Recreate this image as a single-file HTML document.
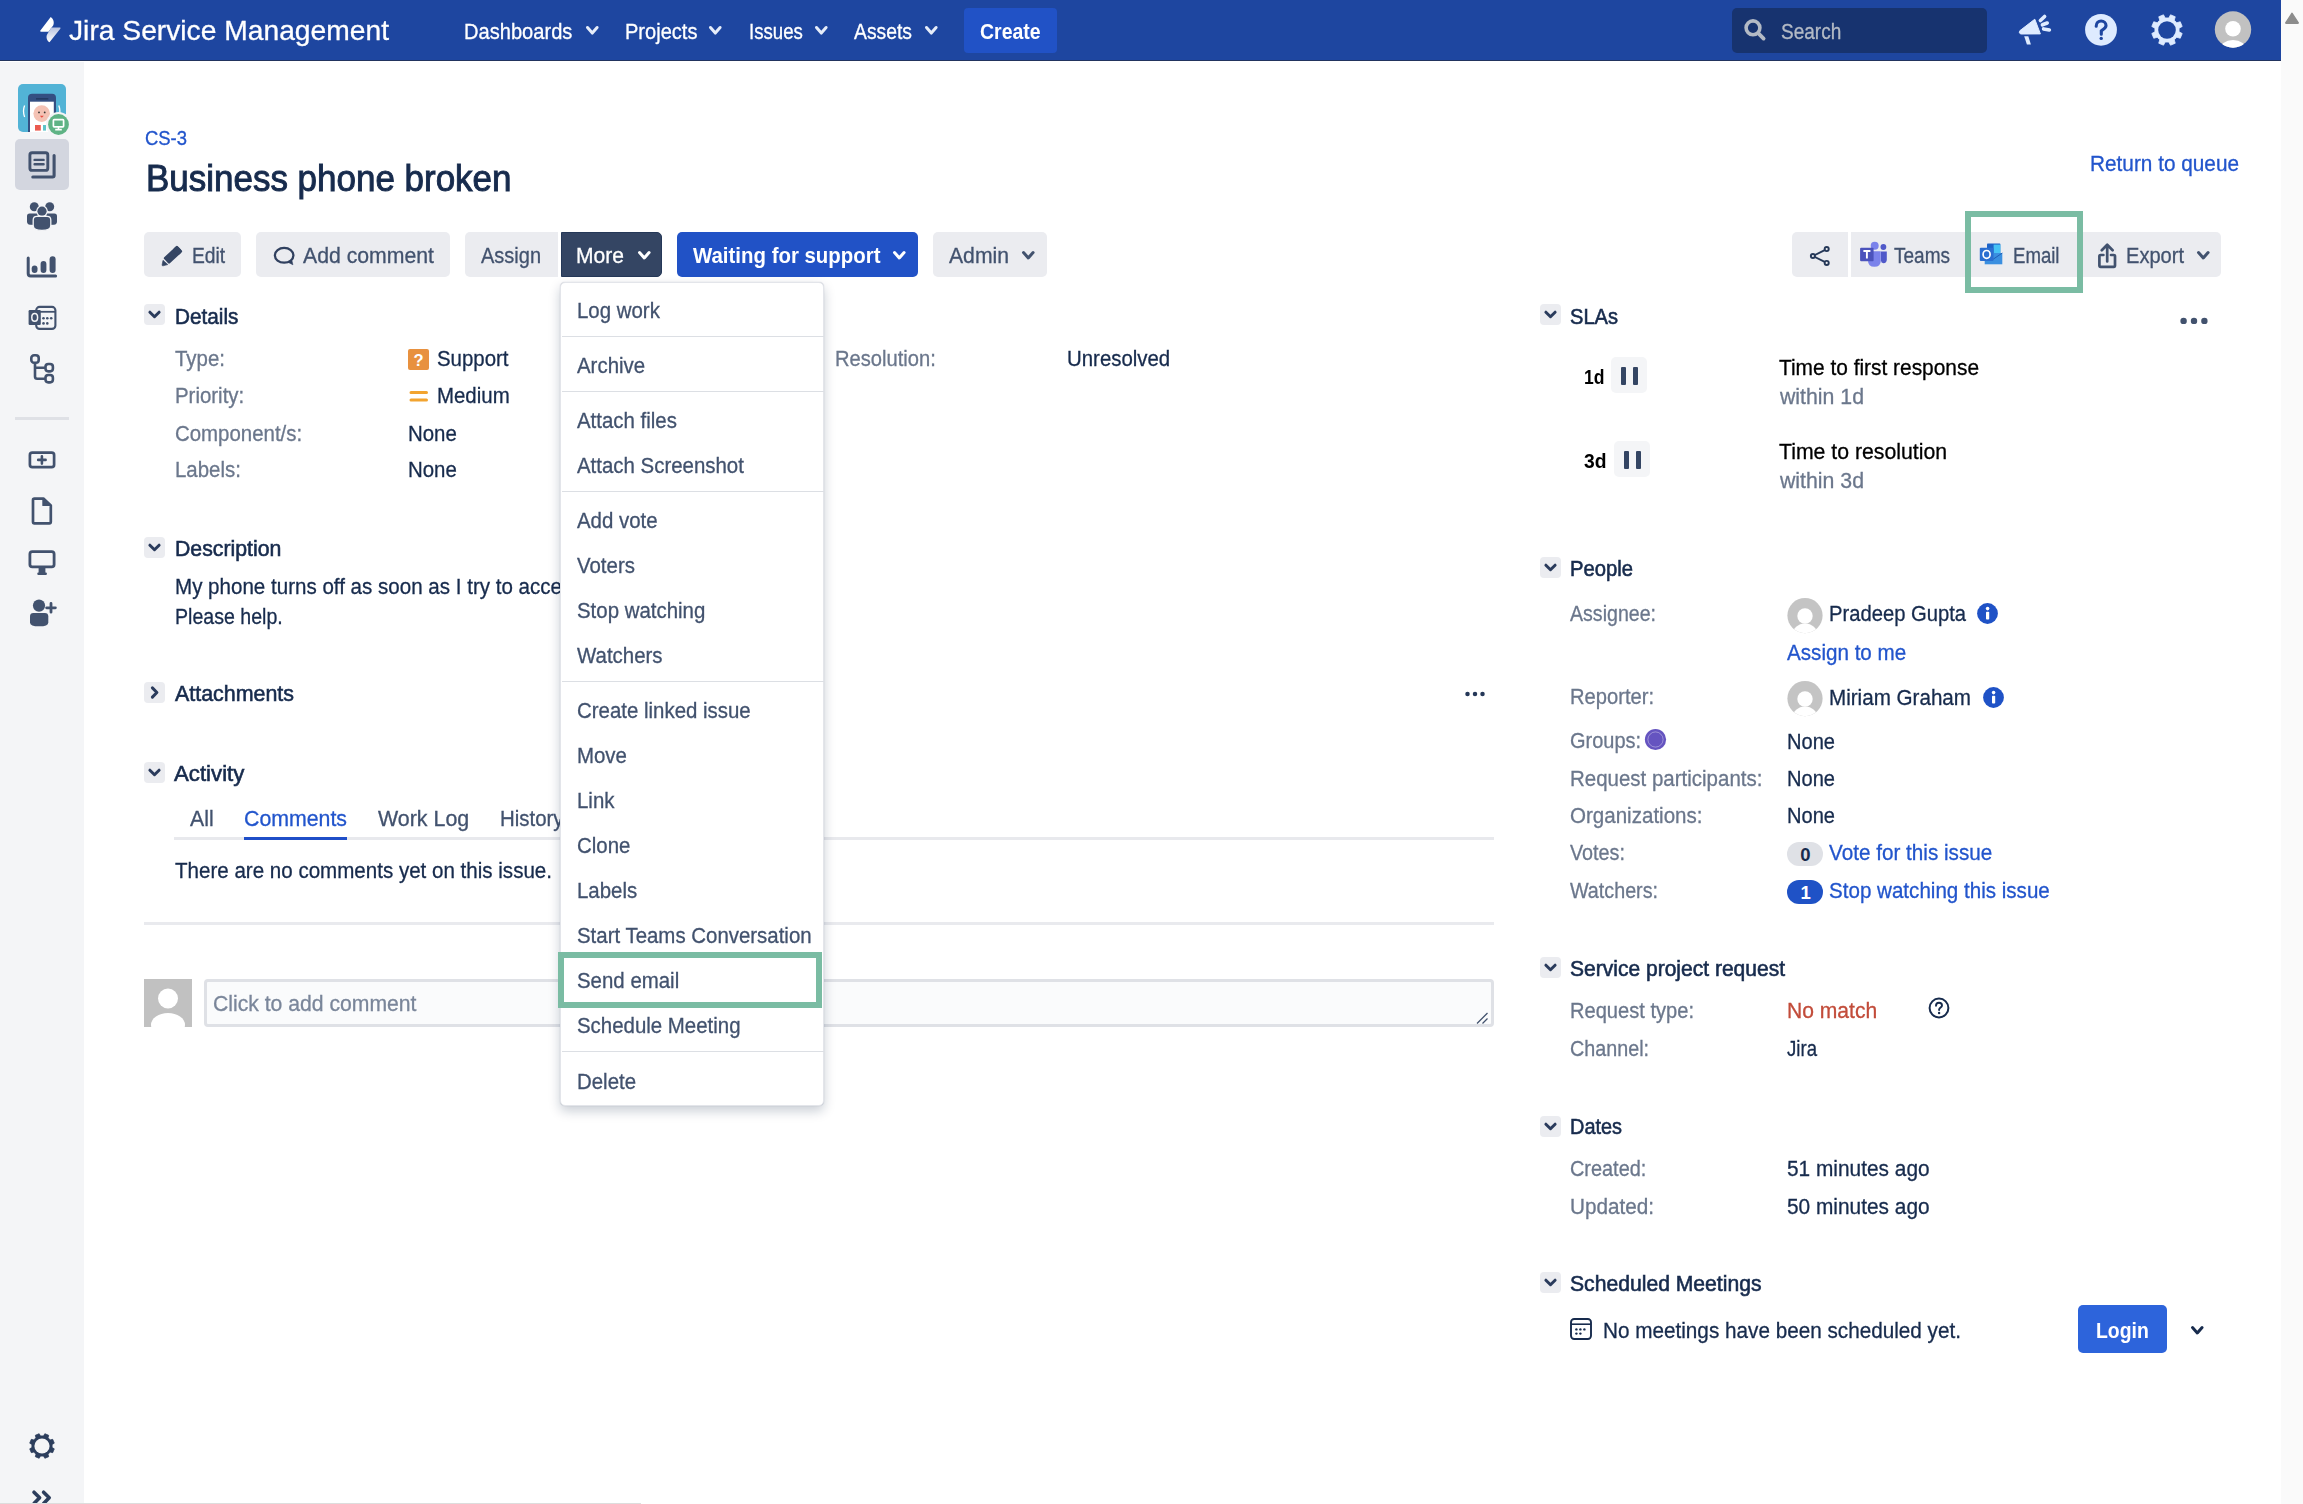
<!DOCTYPE html>
<html><head><meta charset="utf-8"><title>CS-3 Business phone broken</title>
<style>
html,body{margin:0;padding:0;width:2303px;height:1504px;overflow:hidden;background:#fff;font-family:"Liberation Sans",sans-serif;}
.t{position:absolute;white-space:nowrap;transform-origin:0 0;}
.r{position:absolute;}
.s{position:absolute;overflow:visible;}
</style></head><body>
<div class="r" style="left:0px;top:0px;width:2281px;height:60px;background:#1e46a0;"></div>
<div class="r" style="left:0px;top:60px;width:2281px;height:1px;background:#22345e;"></div>
<div class="r" style="left:2281px;top:0px;width:22px;height:1504px;background:#fafafa;"></div>
<svg class="s" style="left:2283px;top:10px;" width="18" height="16" viewBox="0 0 18 16"><path d="M9 3.2 L15.2 12.6 Q15.6 13.4 14.7 13.4 L3.3 13.4 Q2.4 13.4 2.8 12.6 Z" fill="#8c8c8c" stroke="#8c8c8c" stroke-width="1.2" stroke-linejoin="round"/></svg>
<svg class="s" style="left:38px;top:15px;" width="26" height="30" viewBox="0 0 26 30"><defs><linearGradient id="lg1" x1="0" y1="0" x2="0" y2="1"><stop offset="0" stop-color="#b9c3e0"/><stop offset="1" stop-color="#ffffff"/></linearGradient></defs>
<path d="M12.7 2 C15.2 3.6 16.6 7.2 15.3 10.2 L10.5 16.8 L3 16.8 C2.2 16.8 1.9 16.2 2.4 15.6 Z" fill="#fff"/>
<path d="M21.8 12.6 C22.5 12.6 22.8 13.2 22.3 13.8 L11.5 27.3 C9.1 25.7 7.7 22.3 9.1 19.4 L13.3 12.6 Z" fill="url(#lg1)"/></svg>
<div class="t " style="left:69.00px;top:15.0px;font-size:28px;line-height:31px;color:#ffffff;-webkit-text-stroke:0.3px #ffffff;transform:scaleX(1.0079);">Jira Service Management</div>
<div class="t " style="left:464.00px;top:20.0px;font-size:21.5px;line-height:24px;color:#ffffff;-webkit-text-stroke:0.3px #ffffff;transform:scaleX(0.9350);">Dashboards</div>
<svg class="s" style="left:583.6px;top:23.8px;" width="16.6" height="12.6" viewBox="0 0 16.6 12.6"><path d="M3.50 3.50 L8.30 9.10 L13.10 3.50" fill="none" stroke="#e6edfa" stroke-width="3" stroke-linecap="round" stroke-linejoin="round"/></svg>
<div class="t " style="left:624.60px;top:20.0px;font-size:21.5px;line-height:24px;color:#ffffff;-webkit-text-stroke:0.3px #ffffff;transform:scaleX(0.9322);">Projects</div>
<svg class="s" style="left:707.4px;top:23.8px;" width="16.6" height="12.6" viewBox="0 0 16.6 12.6"><path d="M3.50 3.50 L8.30 9.10 L13.10 3.50" fill="none" stroke="#e6edfa" stroke-width="3" stroke-linecap="round" stroke-linejoin="round"/></svg>
<div class="t " style="left:748.50px;top:20.0px;font-size:21.5px;line-height:24px;color:#ffffff;-webkit-text-stroke:0.3px #ffffff;transform:scaleX(0.8674);">Issues</div>
<svg class="s" style="left:813.3px;top:23.8px;" width="16.6" height="12.6" viewBox="0 0 16.6 12.6"><path d="M3.50 3.50 L8.30 9.10 L13.10 3.50" fill="none" stroke="#e6edfa" stroke-width="3" stroke-linecap="round" stroke-linejoin="round"/></svg>
<div class="t " style="left:854.40px;top:20.0px;font-size:21.5px;line-height:24px;color:#ffffff;-webkit-text-stroke:0.3px #ffffff;transform:scaleX(0.8990);">Assets</div>
<svg class="s" style="left:923px;top:23.8px;" width="16.6" height="12.6" viewBox="0 0 16.6 12.6"><path d="M3.50 3.50 L8.30 9.10 L13.10 3.50" fill="none" stroke="#e6edfa" stroke-width="3" stroke-linecap="round" stroke-linejoin="round"/></svg>
<div class="r" style="left:964px;top:8px;width:93px;height:45px;background:#2152c6;border-radius:4px;"></div>
<div class="t " style="left:980.40px;top:20.0px;font-size:21.5px;line-height:24px;color:#ffffff;font-weight:bold;transform:scaleX(0.9055);">Create</div>
<div class="r" style="left:1732px;top:8px;width:255px;height:45px;background:#17336f;border-radius:5px;"></div>
<svg class="s" style="left:1740px;top:16px;" width="30" height="30" viewBox="0 0 30 30"><circle cx="13" cy="11.8" r="6.9" fill="none" stroke="#b3bac5" stroke-width="3.6"/><path d="M18.2 17.2 L23.6 22.6" stroke="#b3bac5" stroke-width="3.8" stroke-linecap="round"/></svg>
<div class="t " style="left:1781.00px;top:20.0px;font-size:21.5px;line-height:24px;color:#b3bac5;-webkit-text-stroke:0.3px #b3bac5;transform:scaleX(0.8852);">Search</div>
<svg class="s" style="left:2015px;top:12px;" width="40" height="36" viewBox="0 0 40 36"><path d="M5 18.6 L19.8 7.2 L25.4 21.9 L6.2 22 Q3.2 21.4 5 18.6 Z" fill="#deebff" stroke="#deebff" stroke-width="1" stroke-linejoin="round"/>
<path d="M9.2 24.3 L13.3 24.3 L15.9 32.6 L11.9 32.6 Z" fill="#deebff"/>
<path d="M25.4 8.6 L29.6 4.4 M27.4 12.8 L32.2 11 M28.6 16.9 L34.4 18" stroke="#deebff" stroke-width="3.6" stroke-linecap="round"/></svg>
<svg class="s" style="left:2084px;top:13px;" width="34" height="34" viewBox="0 0 34 34"><circle cx="17" cy="16.8" r="15.9" fill="#deebff"/>
<path d="M12.2 13.2 C12.2 9.8 14.4 8 17.1 8 C19.9 8 22 9.9 22 12.5 C22 15.4 19.2 16.1 17.3 17.9 L17.3 21.2" fill="none" stroke="#1e46a0" stroke-width="3.1" stroke-linecap="round"/>
<circle cx="17.2" cy="25.4" r="1.7" fill="#1e46a0"/></svg>
<svg class="s" style="left:2150px;top:12.8px;" width="34" height="34" viewBox="0 0 34 34"><path d="M32.20 20.52 L30.24 25.26 L26.81 24.25 L24.25 26.81 L25.26 30.24 L20.52 32.20 L18.81 29.06 L15.19 29.06 L13.48 32.20 L8.74 30.24 L9.75 26.81 L7.19 24.25 L3.76 25.26 L1.80 20.52 L4.94 18.81 L4.94 15.19 L1.80 13.48 L3.76 8.74 L7.19 9.75 L9.75 7.19 L8.74 3.76 L13.48 1.80 L15.19 4.94 L18.81 4.94 L20.52 1.80 L25.26 3.76 L24.25 7.19 L26.81 9.75 L30.24 8.74 L32.20 13.48 L29.06 15.19 L29.06 18.81 Z" fill="#deebff" stroke="#deebff" stroke-width="0.8" stroke-linejoin="round"/><circle cx="17" cy="17" r="8.8" fill="#1e46a0"/></svg>
<svg class="s" style="left:2214px;top:11px;" width="38" height="38" viewBox="0 0 38 38"><defs><clipPath id="avc"><circle cx="19" cy="18.5" r="18.2"/></clipPath></defs>
<circle cx="19" cy="18.5" r="18.2" fill="#c1c1c1"/>
<g clip-path="url(#avc)"><circle cx="19" cy="17.8" r="7.8" fill="#fff"/><ellipse cx="19" cy="38.6" rx="13.5" ry="9.5" fill="#fff"/></g></svg>
<div class="r" style="left:0px;top:61px;width:84px;height:1px;background:#ffffff;"></div>
<div class="r" style="left:0px;top:62px;width:84px;height:1442px;background:#f4f5f7;"></div>
<svg class="s" style="left:16px;top:82px;" width="58" height="58" viewBox="0 0 58 58"><defs><clipPath id="pa"><rect x="2" y="2" width="48" height="48" rx="5"/></clipPath></defs>
<rect x="2" y="2" width="48" height="48" rx="5" fill="#52b3d6"/>
<g clip-path="url(#pa)">
<path d="M12 50 L12 16 Q12 11.8 16.2 11.8 L36 11.8 Q40 11.8 40 16 L40 50 Z" fill="#344f82"/>
<rect x="14" y="19.7" width="23.8" height="32" fill="#fff"/>
<rect x="20" y="16" width="12.3" height="1.6" fill="#243a63"/>
<circle cx="25.7" cy="31.6" r="8.3" fill="#f4c2b4"/>
<circle cx="23" cy="30.4" r="0.9" fill="#333"/><circle cx="28.7" cy="30.4" r="0.9" fill="#333"/>
<path d="M23.8 33.8 L27.8 33.8 L25.8 35.8 Z" fill="#e84a3f"/>
<rect x="19" y="43" width="5.8" height="5.6" fill="#eb5a4f"/>
<rect x="27" y="43" width="3" height="5.6" fill="#5dc3c8"/>
<path d="M8.6 23.5 Q6.4 29 8.6 35" fill="none" stroke="#fff" stroke-width="1.3"/>
<path d="M42.8 23.5 Q45 29 42.8 35" fill="none" stroke="#fff" stroke-width="1.3"/>
</g>
<circle cx="42.5" cy="42.5" r="12.6" fill="#f4f5f7"/>
<circle cx="42.5" cy="42.5" r="10.4" fill="#5fb385"/>
<rect x="37.4" y="37.6" width="10.2" height="7.2" rx="0.8" fill="none" stroke="#fff" stroke-width="1.7"/>
<path d="M42.5 45 L42.5 47.4 M39.2 47.6 L45.8 47.6" stroke="#fff" stroke-width="1.6"/></svg>
<div class="r" style="left:15px;top:139px;width:54px;height:51px;background:#d3d6df;border-radius:5px;"></div>
<svg class="s" style="left:26px;top:149px;" width="34" height="34" viewBox="0 0 34 34"><rect x="3.9" y="3.8" width="17.9" height="17.6" rx="2.2" fill="none" stroke="#42526e" stroke-width="2.9"/>
<path d="M8.6 10.9 L17.6 10.9 M8.6 15.2 L17.6 15.2" stroke="#42526e" stroke-width="2.4" stroke-linecap="round"/>
<path d="M28.1 6.5 L28.1 26.5 Q28.1 28 26.6 28 L6.8 28" fill="none" stroke="#42526e" stroke-width="3.1" stroke-linecap="round"/></svg>
<svg class="s" style="left:25px;top:200px;" width="34" height="34" viewBox="0 0 34 34"><circle cx="9.3" cy="6.8" r="4.5" fill="#42526e"/><circle cx="24.7" cy="6.8" r="4.5" fill="#42526e"/>
<path d="M2 16 Q2 13.4 4.6 13.4 L12.6 13.4 L12.6 25 L5 24.8 Q2 24.6 2 21.6 Z" fill="#42526e"/>
<path d="M32 16 Q32 13.4 29.4 13.4 L21.4 13.4 L21.4 25 L29 24.8 Q32 24.6 32 21.6 Z" fill="#42526e"/>
<circle cx="17" cy="11.2" r="5.8" fill="#f4f5f7"/><circle cx="17" cy="11.2" r="4.6" fill="#42526e"/>
<path d="M8.2 20 Q8.2 16.4 11.8 16.4 L22.2 16.4 Q25.8 16.4 25.8 20 L25.8 25.4 Q25.8 30.4 17 30.4 Q8.2 30.4 8.2 25.4 Z" fill="#42526e" stroke="#f4f5f7" stroke-width="1.3"/></svg>
<svg class="s" style="left:25px;top:254px;" width="34" height="26" viewBox="0 0 34 26"><path d="M3.2 3.9 L3.2 19.6 Q3.2 22.1 5.7 22.1 L30.6 22.1" fill="none" stroke="#42526e" stroke-width="3" stroke-linecap="round"/>
<rect x="6.7" y="11.4" width="5.8" height="7.6" rx="2.9" fill="#42526e"/>
<rect x="15.6" y="7" width="5.8" height="12" rx="2.9" fill="#42526e"/>
<rect x="24.6" y="2.3" width="6" height="16.7" rx="3" fill="#42526e"/></svg>
<svg class="s" style="left:26px;top:304px;" width="32" height="28" viewBox="0 0 32 28"><rect x="10.2" y="2.9" width="19.2" height="22" rx="3.4" fill="none" stroke="#42526e" stroke-width="2.1"/>
<path d="M10.2 7.8 L29.4 7.8" stroke="#42526e" stroke-width="1.8"/>
<rect x="2.6" y="6" width="12.2" height="14.9" rx="1.2" fill="#42526e"/>
<ellipse cx="8.7" cy="13.4" rx="2.9" ry="3.8" fill="none" stroke="#f4f5f7" stroke-width="1.5"/>
<circle cx="17.5" cy="14.3" r="1.3" fill="#42526e"/><circle cx="21.3" cy="14.3" r="1.3" fill="#42526e"/><circle cx="25.2" cy="14.3" r="1.3" fill="#42526e"/>
<circle cx="17.5" cy="19.4" r="1.3" fill="#42526e"/><circle cx="21.3" cy="19.4" r="1.3" fill="#42526e"/></svg>
<svg class="s" style="left:28px;top:352px;" width="30" height="32" viewBox="0 0 30 32"><rect x="3.3" y="3.3" width="7.4" height="7.4" rx="2.8" fill="none" stroke="#42526e" stroke-width="2.6"/>
<rect x="17.5" y="12" width="7.4" height="7.4" rx="2.8" fill="none" stroke="#42526e" stroke-width="2.6"/>
<rect x="17.5" y="23" width="7.4" height="7.4" rx="2.8" fill="none" stroke="#42526e" stroke-width="2.6"/>
<path d="M7 10.7 L7 24.5 Q7 26.7 9.2 26.7 L17.5 26.7 M7 15.7 L17.5 15.7" fill="none" stroke="#42526e" stroke-width="2.6"/></svg>
<div class="r" style="left:15px;top:417px;width:54px;height:3px;background:#dfe1e6;"></div>
<svg class="s" style="left:26px;top:449px;" width="32" height="22" viewBox="0 0 32 22"><rect x="3.9" y="3.6" width="24.2" height="14.6" rx="2.4" fill="none" stroke="#42526e" stroke-width="2.7"/>
<path d="M15.9 7.2 L15.9 14.6 M12.2 10.9 L19.6 10.9" stroke="#42526e" stroke-width="2.6" stroke-linecap="round"/></svg>
<svg class="s" style="left:29px;top:495px;" width="26" height="32" viewBox="0 0 26 32"><path d="M4 5 Q4 3.6 5.4 3.6 L14.4 3.6 L21.8 10.6 L21.8 26.8 Q21.8 28.3 20.3 28.3 L5.4 28.3 Q4 28.3 4 26.8 Z" fill="none" stroke="#42526e" stroke-width="2.7" stroke-linejoin="round"/>
<path d="M14 3.6 L14 10.4 L21.8 10.4" fill="#42526e" stroke="#42526e" stroke-width="1.4" stroke-linejoin="round"/></svg>
<svg class="s" style="left:26px;top:548px;" width="32" height="30" viewBox="0 0 32 30"><rect x="3.9" y="3.6" width="24.2" height="15.2" rx="2.4" fill="none" stroke="#42526e" stroke-width="2.8"/>
<rect x="12.6" y="19" width="6.8" height="6" fill="#42526e"/>
<rect x="11.3" y="24.6" width="9.6" height="2.4" rx="1" fill="#42526e"/></svg>
<svg class="s" style="left:28px;top:597px;" width="30" height="32" viewBox="0 0 30 32"><circle cx="11" cy="8.6" r="6.1" fill="#42526e"/>
<path d="M2 19.4 Q2 16 5.4 16 L16.9 16 Q20.3 16 20.3 19.4 L20.3 25.4 Q20.3 29.3 11.2 29.3 Q2 29.3 2 25.4 Z" fill="#42526e"/>
<path d="M23 6.4 L23 15.2 M18.6 10.8 L27.4 10.8" stroke="#42526e" stroke-width="2.8" stroke-linecap="round"/></svg>
<svg class="s" style="left:28.1px;top:1432px;" width="28" height="28" viewBox="0 0 28 28"><path d="M26.27 16.85 L24.69 20.67 L22.20 20.06 L20.06 22.20 L20.67 24.69 L16.85 26.27 L15.52 24.09 L12.48 24.09 L11.15 26.27 L7.33 24.69 L7.94 22.20 L5.80 20.06 L3.31 20.67 L1.73 16.85 L3.91 15.52 L3.91 12.48 L1.73 11.15 L3.31 7.33 L5.80 7.94 L7.94 5.80 L7.33 3.31 L11.15 1.73 L12.48 3.91 L15.52 3.91 L16.85 1.73 L20.67 3.31 L20.06 5.80 L22.20 7.94 L24.69 7.33 L26.27 11.15 L24.09 12.48 L24.09 15.52 Z" fill="#2c3e5d" stroke="#2c3e5d" stroke-width="0.8" stroke-linejoin="round"/><circle cx="14" cy="14" r="7.6" fill="#f4f5f7"/></svg>
<svg class="s" style="left:29px;top:1487px;" width="28" height="20" viewBox="0 0 28 20"><path d="M5 5.2 L10.6 10.8 L5 16.4 M14.6 5.2 L20.2 10.8 L14.6 16.4" fill="none" stroke="#2c3e5d" stroke-width="3.6" stroke-linecap="round" stroke-linejoin="round"/></svg>
<div class="r" style="left:0px;top:1503px;width:641px;height:1px;background:#dddddd;"></div>
<div class="t " style="left:144.50px;top:127.0px;font-size:19.5px;line-height:22px;color:#2255cc;-webkit-text-stroke:0.3px #2255cc;transform:scaleX(0.9454);">CS-3</div>
<div class="t " style="left:146.30px;top:158.2px;font-size:36px;line-height:41px;color:#172b4d;transform:scaleX(0.9713);-webkit-text-stroke:0.95px #172b4d;">Business phone broken</div>
<div class="t " style="left:2089.60px;top:152.4px;font-size:21.5px;line-height:24px;color:#2255cc;-webkit-text-stroke:0.3px #2255cc;transform:scaleX(0.9663);">Return to queue</div>
<div class="r" style="left:144px;top:232px;width:97px;height:45px;background:#ebecf0;border-radius:5px;"></div>
<svg class="s" style="left:158px;top:242px;" width="28" height="28" viewBox="0 0 28 28"><g transform="translate(14.97,12.8) rotate(-43)"><rect x="-9.3" y="-4.15" width="18.6" height="8.3" rx="1.2" fill="#344563"/><rect x="3" y="-4.15" width="6.3" height="8.3" rx="2.6" fill="#344563"/></g>
<path d="M5 18.3 L9.8 22.6 L5.2 23.8 Q3.9 24.1 4.1 22.8 Z" fill="#344563" stroke="#344563" stroke-width="0.6" stroke-linejoin="round"/></svg>
<div class="t " style="left:191.80px;top:244.0px;font-size:21.5px;line-height:24px;color:#42526e;-webkit-text-stroke:0.3px #42526e;transform:scaleX(0.8962);">Edit</div>
<div class="r" style="left:256px;top:232px;width:194px;height:45px;background:#ebecf0;border-radius:5px;"></div>
<svg class="s" style="left:270px;top:243px;" width="28" height="26" viewBox="0 0 28 26"><ellipse cx="14.15" cy="12.3" rx="9.3" ry="7.4" fill="none" stroke="#30405f" stroke-width="2.3"/>
<path d="M18 19.2 L21.8 17.2 L22.9 21.8 Z" fill="#30405f" stroke="#30405f" stroke-width="0.6" stroke-linejoin="round"/></svg>
<div class="t " style="left:302.70px;top:244.0px;font-size:21.5px;line-height:24px;color:#42526e;-webkit-text-stroke:0.3px #42526e;transform:scaleX(0.9876);">Add comment</div>
<div class="r" style="left:465px;top:232px;width:93px;height:45px;background:#ebecf0;border-radius:5px 0 0 5px"></div>
<div class="t " style="left:481.30px;top:244.0px;font-size:21.5px;line-height:24px;color:#42526e;-webkit-text-stroke:0.3px #42526e;transform:scaleX(0.9298);">Assign</div>
<div class="r" style="left:561px;top:232px;width:99px;height:43px;background:#344563;border:1px solid #253858;border-radius:0 5px 5px 0"></div>
<div class="t " style="left:576.30px;top:244.0px;font-size:21.5px;line-height:24px;color:#ffffff;-webkit-text-stroke:0.3px #ffffff;transform:scaleX(0.9799);">More</div>
<svg class="s" style="left:636px;top:249px;" width="16.6" height="12.4" viewBox="0 0 16.6 12.4"><path d="M3.50 3.50 L8.30 8.90 L13.10 3.50" fill="none" stroke="#ffffff" stroke-width="3" stroke-linecap="round" stroke-linejoin="round"/></svg>
<div class="r" style="left:677px;top:232px;width:241px;height:45px;background:#2152c6;border-radius:5px;"></div>
<div class="t " style="left:692.80px;top:244.0px;font-size:21.5px;line-height:24px;color:#ffffff;font-weight:bold;transform:scaleX(0.9496);">Waiting for support</div>
<svg class="s" style="left:891.3px;top:249px;" width="16.6" height="12.4" viewBox="0 0 16.6 12.4"><path d="M3.50 3.50 L8.30 8.90 L13.10 3.50" fill="none" stroke="#ffffff" stroke-width="3" stroke-linecap="round" stroke-linejoin="round"/></svg>
<div class="r" style="left:933px;top:232px;width:114px;height:45px;background:#ebecf0;border-radius:5px;"></div>
<div class="t " style="left:949.20px;top:244.0px;font-size:21.5px;line-height:24px;color:#42526e;-webkit-text-stroke:0.3px #42526e;transform:scaleX(0.9846);">Admin</div>
<svg class="s" style="left:1020px;top:249px;" width="16.6" height="12.4" viewBox="0 0 16.6 12.4"><path d="M3.50 3.50 L8.30 8.90 L13.10 3.50" fill="none" stroke="#42526e" stroke-width="3" stroke-linecap="round" stroke-linejoin="round"/></svg>
<div class="r" style="left:1792px;top:232px;width:56px;height:45px;background:#ebecf0;border-radius:5px 0 0 5px"></div>
<svg class="s" style="left:1805px;top:242px;" width="30" height="30" viewBox="0 0 30 30"><path d="M7.9 14 L21.7 7.1 M7.9 14 L21.7 20.9" stroke="#253858" stroke-width="1.9"/>
<circle cx="7.9" cy="14" r="2.05" fill="#ebecf0" stroke="#253858" stroke-width="1.9"/>
<circle cx="21.7" cy="7.1" r="2.05" fill="#ebecf0" stroke="#253858" stroke-width="1.9"/>
<circle cx="21.7" cy="20.9" r="2.05" fill="#ebecf0" stroke="#253858" stroke-width="1.9"/></svg>
<div class="r" style="left:1851px;top:232px;width:370px;height:45px;background:#ebecf0;border-radius:0 5px 5px 0"></div>
<svg class="s" style="left:1858px;top:240px;" width="32" height="30" viewBox="0 0 32 30"><circle cx="25.4" cy="7" r="2.9" fill="#5059c9"/>
<path d="M23 11.4 L28.8 11.4 L28.8 19.6 Q28.8 23.2 25.4 23.2 Q23 23.2 23 20.8 Z" fill="#5059c9"/>
<circle cx="16.7" cy="5.8" r="4" fill="#7b83eb"/>
<path d="M10 11.2 L22.8 11.2 L22.8 20.8 Q22.8 26.8 16.4 26.8 Q10 26.8 10 20.8 Z" fill="#7b83eb"/>
<rect x="2.1" y="7.7" width="13.5" height="13.5" rx="1" fill="#4b53bc"/>
<path d="M5.4 11 L12.4 11 M8.9 11 L8.9 18.4" stroke="#fff" stroke-width="1.9"/></svg>
<div class="t " style="left:1894.00px;top:244.0px;font-size:21.5px;line-height:24px;color:#42526e;-webkit-text-stroke:0.3px #42526e;transform:scaleX(0.8843);">Teams</div>
<svg class="s" style="left:1977px;top:241px;" width="28" height="26" viewBox="0 0 28 26"><rect x="10" y="2.6" width="13.4" height="10" rx="0.8" fill="#1e64c8"/>
<rect x="16.6" y="3.6" width="6.8" height="8.6" fill="#50d9ff" opacity="0.8"/>
<path d="M7.7 12 L25.3 12 L25.3 23.3 L7.7 23.3 Z" fill="#3a8fe0"/>
<path d="M7.7 12 L16.5 18 L25.3 12" fill="none" stroke="#1f5fb8" stroke-width="1"/>
<rect x="2.8" y="6.7" width="13.7" height="13.4" rx="1" fill="#2a6fd1"/>
<ellipse cx="9.6" cy="13.4" rx="3.5" ry="3.9" fill="none" stroke="#fff" stroke-width="1.7"/></svg>
<div class="t " style="left:2013.00px;top:244.0px;font-size:21.5px;line-height:24px;color:#42526e;-webkit-text-stroke:0.3px #42526e;transform:scaleX(0.8649);">Email</div>
<svg class="s" style="left:2094px;top:241px;" width="26" height="30" viewBox="0 0 26 30"><path d="M13.2 4 L13.2 20.4 M7.8 9.2 L13.2 3.8 L18.6 9.2" fill="none" stroke="#42526e" stroke-width="2.7" stroke-linecap="round" stroke-linejoin="round"/>
<path d="M9.4 14 L6.6 14 Q5.4 14 5.4 15.2 L5.4 24.6 Q5.4 25.8 6.6 25.8 L19.8 25.8 Q21 25.8 21 24.6 L21 15.2 Q21 14 19.8 14 L17 14" fill="none" stroke="#42526e" stroke-width="2.7" stroke-linecap="round"/></svg>
<div class="t " style="left:2126.00px;top:244.0px;font-size:21.5px;line-height:24px;color:#42526e;-webkit-text-stroke:0.3px #42526e;transform:scaleX(0.9334);">Export</div>
<svg class="s" style="left:2195px;top:249px;" width="16.6" height="12.4" viewBox="0 0 16.6 12.4"><path d="M3.50 3.50 L8.30 8.90 L13.10 3.50" fill="none" stroke="#42526e" stroke-width="3" stroke-linecap="round" stroke-linejoin="round"/></svg>
<div class="r" style="left:1965px;top:211px;width:106px;height:70px;border:6px solid #7abca3"></div>
<div class="r" style="left:144px;top:304px;width:21px;height:21px;background:#ebecf0;border-radius:4px;"></div>
<svg class="s" style="left:144px;top:304px;" width="21" height="21" viewBox="0 0 21 21"><path d="M5.9 8.2 L10.5 12.7 L15.1 8.2" fill="none" stroke="#2a3b5c" stroke-width="3" stroke-linecap="round" stroke-linejoin="round"/></svg>
<div class="t " style="left:174.70px;top:304.7px;font-size:21.5px;line-height:24px;color:#172b4d;-webkit-text-stroke:0.58px #172b4d;transform:scaleX(0.9647);">Details</div>
<div class="t " style="left:174.70px;top:347.0px;font-size:21.5px;line-height:24px;color:#6b778c;-webkit-text-stroke:0.3px #6b778c;transform:scaleX(0.9500);">Type:</div>
<div class="t " style="left:174.70px;top:383.7px;font-size:21.5px;line-height:24px;color:#6b778c;-webkit-text-stroke:0.3px #6b778c;transform:scaleX(0.9500);">Priority:</div>
<div class="t " style="left:174.70px;top:421.5px;font-size:21.5px;line-height:24px;color:#6b778c;-webkit-text-stroke:0.3px #6b778c;transform:scaleX(0.9500);">Component/s:</div>
<div class="t " style="left:174.70px;top:458.4px;font-size:21.5px;line-height:24px;color:#6b778c;-webkit-text-stroke:0.3px #6b778c;transform:scaleX(0.9500);">Labels:</div>
<div class="r" style="left:408px;top:349px;width:21px;height:21px;background:#e8913f;border-radius:2px;"></div>
<svg class="s" style="left:408px;top:349px;" width="21" height="21" viewBox="0 0 21 21"><text x="10.5" y="17.4" text-anchor="middle" font-family="Liberation Sans" font-size="16.5" font-weight="bold" fill="#fff">?</text></svg>
<div class="t " style="left:437.00px;top:347.0px;font-size:21.5px;line-height:24px;color:#172b4d;-webkit-text-stroke:0.3px #172b4d;transform:scaleX(0.9500);">Support</div>
<svg class="s" style="left:408px;top:388px;" width="22" height="16" viewBox="0 0 22 16"><path d="M3 4.5 L18.5 4.5 M3 12 L18.5 12" stroke="#f2a430" stroke-width="3" stroke-linecap="round"/></svg>
<div class="t " style="left:437.00px;top:383.7px;font-size:21.5px;line-height:24px;color:#172b4d;-webkit-text-stroke:0.3px #172b4d;transform:scaleX(0.9500);">Medium</div>
<div class="t " style="left:407.50px;top:421.5px;font-size:21.5px;line-height:24px;color:#172b4d;-webkit-text-stroke:0.3px #172b4d;transform:scaleX(0.9500);">None</div>
<div class="t " style="left:407.50px;top:458.4px;font-size:21.5px;line-height:24px;color:#172b4d;-webkit-text-stroke:0.3px #172b4d;transform:scaleX(0.9500);">None</div>
<div class="t " style="left:834.80px;top:347.4px;font-size:21.5px;line-height:24px;color:#6b778c;-webkit-text-stroke:0.3px #6b778c;transform:scaleX(0.9371);">Resolution:</div>
<div class="t " style="left:1067.00px;top:347.4px;font-size:21.5px;line-height:24px;color:#172b4d;-webkit-text-stroke:0.3px #172b4d;transform:scaleX(0.9490);">Unresolved</div>
<div class="r" style="left:144px;top:537px;width:21px;height:21px;background:#ebecf0;border-radius:4px;"></div>
<svg class="s" style="left:144px;top:537px;" width="21" height="21" viewBox="0 0 21 21"><path d="M5.9 8.2 L10.5 12.7 L15.1 8.2" fill="none" stroke="#2a3b5c" stroke-width="3" stroke-linecap="round" stroke-linejoin="round"/></svg>
<div class="t " style="left:175.00px;top:537.0px;font-size:21.5px;line-height:24px;color:#172b4d;-webkit-text-stroke:0.58px #172b4d;transform:scaleX(0.9894);">Description</div>
<div class="t " style="left:175.00px;top:575.0px;font-size:21.5px;line-height:24px;color:#172b4d;-webkit-text-stroke:0.3px #172b4d;transform:scaleX(0.9562);">My phone turns off as soon as I try to access my contacts.</div>
<div class="t " style="left:175.00px;top:604.5px;font-size:21.5px;line-height:24px;color:#172b4d;-webkit-text-stroke:0.3px #172b4d;transform:scaleX(0.9102);">Please help.</div>
<div class="r" style="left:144px;top:682px;width:21px;height:21px;background:#ebecf0;border-radius:4px;"></div>
<svg class="s" style="left:144px;top:682px;" width="21" height="21" viewBox="0 0 21 21"><path d="M8.4 5.9 L12.9 10.5 L8.4 15.1" fill="none" stroke="#2a3b5c" stroke-width="3" stroke-linecap="round" stroke-linejoin="round"/></svg>
<div class="t " style="left:174.70px;top:682.0px;font-size:21.5px;line-height:24px;color:#172b4d;-webkit-text-stroke:0.58px #172b4d;transform:scaleX(0.9958);">Attachments</div>
<svg class="s" style="left:1462px;top:688px;" width="26" height="12" viewBox="0 0 26 12"><circle cx="5.5" cy="6" r="2.25" fill="#253858"/><circle cx="13" cy="6" r="2.25" fill="#253858"/><circle cx="20.5" cy="6" r="2.25" fill="#253858"/></svg>
<div class="r" style="left:144px;top:762px;width:21px;height:21px;background:#ebecf0;border-radius:4px;"></div>
<svg class="s" style="left:144px;top:762px;" width="21" height="21" viewBox="0 0 21 21"><path d="M5.9 8.2 L10.5 12.7 L15.1 8.2" fill="none" stroke="#2a3b5c" stroke-width="3" stroke-linecap="round" stroke-linejoin="round"/></svg>
<div class="t " style="left:174.30px;top:762.0px;font-size:21.5px;line-height:24px;color:#172b4d;-webkit-text-stroke:0.58px #172b4d;transform:scaleX(1.0339);">Activity</div>
<div class="r" style="left:174px;top:837px;width:1320px;height:3px;background:#e8e9ed;"></div>
<div class="t " style="left:189.70px;top:807.2px;font-size:21.5px;line-height:24px;color:#42526e;-webkit-text-stroke:0.3px #42526e;transform:scaleX(0.9877);">All</div>
<div class="t " style="left:244.00px;top:807.2px;font-size:21.5px;line-height:24px;color:#2255cc;-webkit-text-stroke:0.3px #2255cc;transform:scaleX(0.9909);">Comments</div>
<div class="r" style="left:244px;top:837px;width:103px;height:3px;background:#1f4ec8;"></div>
<div class="t " style="left:377.60px;top:807.2px;font-size:21.5px;line-height:24px;color:#42526e;-webkit-text-stroke:0.3px #42526e;transform:scaleX(0.9954);">Work Log</div>
<div class="t " style="left:500.20px;top:807.2px;font-size:21.5px;line-height:24px;color:#42526e;-webkit-text-stroke:0.3px #42526e;transform:scaleX(0.9500);">History</div>
<div class="t " style="left:175.00px;top:859.2px;font-size:21.5px;line-height:24px;color:#172b4d;-webkit-text-stroke:0.3px #172b4d;transform:scaleX(0.9560);">There are no comments yet on this issue.</div>
<div class="r" style="left:144px;top:922px;width:1350px;height:3px;background:#e9eaee;"></div>
<svg class="s" style="left:144px;top:979px;" width="48" height="48" viewBox="0 0 48 48"><rect width="48" height="48" fill="#c1c1c1"/>
<circle cx="24" cy="19.5" r="10" fill="#fff"/><ellipse cx="24" cy="46" rx="17" ry="12" fill="#fff"/></svg>
<div class="r" style="left:204px;top:979px;width:1284px;height:42px;border:3px solid #dfe1e6;background:#fafbfc;border-radius:4px"></div>
<div class="t " style="left:213.30px;top:992.3px;font-size:21.5px;line-height:24px;color:#7a869a;-webkit-text-stroke:0.3px #7a869a;transform:scaleX(0.9840);">Click to add comment</div>
<svg class="s" style="left:1474px;top:1010px;" width="16" height="16" viewBox="0 0 16 16"><path d="M3 13.5 L13.5 3 M8.5 13.5 L13.5 8.5" stroke="#42526e" stroke-width="1.3"/></svg>
<div class="r" style="left:1539.5px;top:304.3px;width:21px;height:21px;background:#ebecf0;border-radius:4px;"></div>
<svg class="s" style="left:1539.5px;top:304.3px;" width="21" height="21" viewBox="0 0 21 21"><path d="M5.9 8.2 L10.5 12.7 L15.1 8.2" fill="none" stroke="#2a3b5c" stroke-width="3" stroke-linecap="round" stroke-linejoin="round"/></svg>
<div class="t " style="left:1569.50px;top:304.6px;font-size:21.5px;line-height:24px;color:#172b4d;-webkit-text-stroke:0.58px #172b4d;transform:scaleX(0.9341);">SLAs</div>
<svg class="s" style="left:2176px;top:314px;" width="36" height="14" viewBox="0 0 36 14"><circle cx="7.6" cy="6.9" r="3.2" fill="#42526e"/><circle cx="18" cy="6.9" r="3.2" fill="#42526e"/><circle cx="28.4" cy="6.9" r="3.2" fill="#42526e"/></svg>
<div class="t " style="left:1583.80px;top:365.6px;font-size:20px;line-height:22px;color:#000000;font-weight:bold;transform:scaleX(0.8782);">1d</div>
<div class="r" style="left:1611px;top:357px;width:36px;height:36px;background:#f4f5f7;border-radius:5px;"></div>
<div class="r" style="left:1621.3px;top:366.6px;width:4.5px;height:18px;background:#344563;border-radius:1px;"></div>
<div class="r" style="left:1632.9px;top:366.6px;width:4.8px;height:18px;background:#344563;border-radius:1px;"></div>
<div class="t " style="left:1779.40px;top:355.7px;font-size:21.5px;line-height:24px;color:#000000;-webkit-text-stroke:0.3px #000000;transform:scaleX(0.9713);">Time to first response</div>
<div class="t " style="left:1779.65px;top:385.0px;font-size:21.5px;line-height:24px;color:#6b778c;-webkit-text-stroke:0.3px #6b778c;transform:scaleX(0.9899);">within 1d</div>
<div class="t " style="left:1583.80px;top:449.8px;font-size:20px;line-height:22px;color:#000000;font-weight:bold;transform:scaleX(0.9639);">3d</div>
<div class="r" style="left:1614px;top:441px;width:36px;height:36px;background:#f4f5f7;border-radius:5px;"></div>
<div class="r" style="left:1624.3px;top:450.6px;width:4.5px;height:18px;background:#344563;border-radius:1px;"></div>
<div class="r" style="left:1635.9px;top:450.6px;width:4.8px;height:18px;background:#344563;border-radius:1px;"></div>
<div class="t " style="left:1779.40px;top:439.6px;font-size:21.5px;line-height:24px;color:#000000;-webkit-text-stroke:0.3px #000000;transform:scaleX(0.9878);">Time to resolution</div>
<div class="t " style="left:1779.65px;top:469.3px;font-size:21.5px;line-height:24px;color:#6b778c;-webkit-text-stroke:0.3px #6b778c;transform:scaleX(0.9899);">within 3d</div>
<div class="r" style="left:1539.5px;top:557px;width:21px;height:21px;background:#ebecf0;border-radius:4px;"></div>
<svg class="s" style="left:1539.5px;top:557px;" width="21" height="21" viewBox="0 0 21 21"><path d="M5.9 8.2 L10.5 12.7 L15.1 8.2" fill="none" stroke="#2a3b5c" stroke-width="3" stroke-linecap="round" stroke-linejoin="round"/></svg>
<div class="t " style="left:1570.00px;top:556.7px;font-size:21.5px;line-height:24px;color:#172b4d;-webkit-text-stroke:0.58px #172b4d;transform:scaleX(0.9411);">People</div>
<div class="t " style="left:1570.00px;top:601.7px;font-size:21.5px;line-height:24px;color:#6b778c;-webkit-text-stroke:0.3px #6b778c;transform:scaleX(0.9108);">Assignee:</div>
<svg class="s" style="left:1787px;top:598px;" width="36" height="36" viewBox="0 0 36 36"><defs><clipPath id="ac598"><circle cx="18" cy="17.6" r="17.6"/></clipPath><filter id="bl598" x="-20%" y="-20%" width="140%" height="140%"><feGaussianBlur stdDeviation="0.7"/></filter></defs><circle cx="18" cy="17.6" r="17.6" fill="#c4c4c4"/>
<g clip-path="url(#ac598)"><g filter="url(#bl598)"><circle cx="18" cy="18" r="7.7" fill="#fff"/><ellipse cx="18" cy="37" rx="12.5" ry="11.5" fill="#fff"/></g></g></svg>
<div class="t " style="left:1829.10px;top:601.9px;font-size:21.5px;line-height:24px;color:#172b4d;-webkit-text-stroke:0.3px #172b4d;transform:scaleX(0.9395);">Pradeep Gupta</div>
<svg class="s" style="left:1977.4px;top:603.2px;" width="21" height="21" viewBox="0 0 21 21"><circle cx="10.5" cy="10.5" r="10.4" fill="#1f52c6"/><rect x="9" y="8.8" width="3.2" height="7.8" rx="0.8" fill="#fff"/><circle cx="10.6" cy="5.6" r="1.8" fill="#fff"/></svg>
<div class="t " style="left:1787.00px;top:641.2px;font-size:21.5px;line-height:24px;color:#2255cc;-webkit-text-stroke:0.3px #2255cc;transform:scaleX(0.9592);">Assign to me</div>
<div class="t " style="left:1570.00px;top:685.3px;font-size:21.5px;line-height:24px;color:#6b778c;-webkit-text-stroke:0.3px #6b778c;transform:scaleX(0.9373);">Reporter:</div>
<svg class="s" style="left:1787px;top:681px;" width="36" height="36" viewBox="0 0 36 36"><defs><clipPath id="ac681"><circle cx="18" cy="17.6" r="17.6"/></clipPath><filter id="bl681" x="-20%" y="-20%" width="140%" height="140%"><feGaussianBlur stdDeviation="0.7"/></filter></defs><circle cx="18" cy="17.6" r="17.6" fill="#c4c4c4"/>
<g clip-path="url(#ac681)"><g filter="url(#bl681)"><circle cx="18" cy="18" r="7.7" fill="#fff"/><ellipse cx="18" cy="37" rx="12.5" ry="11.5" fill="#fff"/></g></g></svg>
<div class="t " style="left:1829.10px;top:685.5px;font-size:21.5px;line-height:24px;color:#172b4d;-webkit-text-stroke:0.3px #172b4d;transform:scaleX(0.9586);">Miriam Graham</div>
<svg class="s" style="left:1982.8px;top:687.4px;" width="21" height="21" viewBox="0 0 21 21"><circle cx="10.5" cy="10.5" r="10.4" fill="#1f52c6"/><rect x="9" y="8.8" width="3.2" height="7.8" rx="0.8" fill="#fff"/><circle cx="10.6" cy="5.6" r="1.8" fill="#fff"/></svg>
<div class="t " style="left:1570.00px;top:729.0px;font-size:21.5px;line-height:24px;color:#6b778c;-webkit-text-stroke:0.3px #6b778c;transform:scaleX(0.9284);">Groups:</div>
<svg class="s" style="left:1644px;top:728px;" width="23" height="23" viewBox="0 0 23 23"><circle cx="11.5" cy="11.5" r="10.6" fill="#6554c0"/><circle cx="11.5" cy="11.5" r="7.6" fill="none" stroke="#ffffff" stroke-opacity="0.45" stroke-width="0.8"/></svg>
<div class="t " style="left:1787.00px;top:729.5px;font-size:21.5px;line-height:24px;color:#172b4d;-webkit-text-stroke:0.3px #172b4d;transform:scaleX(0.9339);">None</div>
<div class="t " style="left:1570.00px;top:766.7px;font-size:21.5px;line-height:24px;color:#6b778c;-webkit-text-stroke:0.3px #6b778c;transform:scaleX(0.9526);">Request participants:</div>
<div class="t " style="left:1787.00px;top:766.7px;font-size:21.5px;line-height:24px;color:#172b4d;-webkit-text-stroke:0.3px #172b4d;transform:scaleX(0.9339);">None</div>
<div class="t " style="left:1570.00px;top:804.4px;font-size:21.5px;line-height:24px;color:#6b778c;-webkit-text-stroke:0.3px #6b778c;transform:scaleX(0.9558);">Organizations:</div>
<div class="t " style="left:1787.00px;top:804.4px;font-size:21.5px;line-height:24px;color:#172b4d;-webkit-text-stroke:0.3px #172b4d;transform:scaleX(0.9339);">None</div>
<div class="t " style="left:1570.00px;top:841.2px;font-size:21.5px;line-height:24px;color:#6b778c;-webkit-text-stroke:0.3px #6b778c;transform:scaleX(0.9203);">Votes:</div>
<div class="r" style="left:1787px;top:842px;width:36px;height:24px;background:#dfe1e6;border-radius:12px;"></div>
<div class="t " style="left:1800.20px;top:843.8px;font-size:18.5px;line-height:21px;color:#172b4d;font-weight:bold;">0</div>
<div class="t " style="left:1829.00px;top:841.2px;font-size:21.5px;line-height:24px;color:#2255cc;-webkit-text-stroke:0.3px #2255cc;transform:scaleX(0.9623);">Vote for this issue</div>
<div class="t " style="left:1570.00px;top:879.0px;font-size:21.5px;line-height:24px;color:#6b778c;-webkit-text-stroke:0.3px #6b778c;transform:scaleX(0.9169);">Watchers:</div>
<div class="r" style="left:1787px;top:880px;width:36px;height:24px;background:#1f52c6;border-radius:12px;"></div>
<div class="t " style="left:1800.60px;top:882.0px;font-size:18.5px;line-height:21px;color:#ffffff;font-weight:bold;">1</div>
<div class="t " style="left:1829.00px;top:878.9px;font-size:21.5px;line-height:24px;color:#2255cc;-webkit-text-stroke:0.3px #2255cc;transform:scaleX(0.9573);">Stop watching this issue</div>
<div class="r" style="left:1539.5px;top:957.4px;width:21px;height:21px;background:#ebecf0;border-radius:4px;"></div>
<svg class="s" style="left:1539.5px;top:957.4px;" width="21" height="21" viewBox="0 0 21 21"><path d="M5.9 8.2 L10.5 12.7 L15.1 8.2" fill="none" stroke="#2a3b5c" stroke-width="3" stroke-linecap="round" stroke-linejoin="round"/></svg>
<div class="t " style="left:1570.00px;top:957.4px;font-size:21.5px;line-height:24px;color:#172b4d;-webkit-text-stroke:0.58px #172b4d;transform:scaleX(0.9778);">Service project request</div>
<div class="t " style="left:1570.00px;top:999.4px;font-size:21.5px;line-height:24px;color:#6b778c;-webkit-text-stroke:0.3px #6b778c;transform:scaleX(0.9347);">Request type:</div>
<div class="t " style="left:1787.00px;top:999.4px;font-size:21.5px;line-height:24px;color:#c24c3a;-webkit-text-stroke:0.3px #c24c3a;transform:scaleX(0.9804);">No match</div>
<svg class="s" style="left:1927px;top:996px;" width="24" height="24" viewBox="0 0 24 24"><circle cx="12" cy="12" r="9.4" fill="none" stroke="#172b4d" stroke-width="2"/><path d="M9 9.8 C9 7.8 10.4 6.8 12 6.8 C13.7 6.8 15 7.9 15 9.5 C15 11.4 12.4 11.7 12.1 13.6 L12.1 14" fill="none" stroke="#172b4d" stroke-width="1.9" stroke-linecap="round"/><circle cx="12.1" cy="17" r="1.2" fill="#172b4d"/></svg>
<div class="t " style="left:1570.00px;top:1036.5px;font-size:21.5px;line-height:24px;color:#6b778c;-webkit-text-stroke:0.3px #6b778c;transform:scaleX(0.9179);">Channel:</div>
<div class="t " style="left:1787.00px;top:1036.5px;font-size:21.5px;line-height:24px;color:#172b4d;-webkit-text-stroke:0.3px #172b4d;transform:scaleX(0.8659);">Jira</div>
<div class="r" style="left:1539.5px;top:1115.5px;width:21px;height:21px;background:#ebecf0;border-radius:4px;"></div>
<svg class="s" style="left:1539.5px;top:1115.5px;" width="21" height="21" viewBox="0 0 21 21"><path d="M5.9 8.2 L10.5 12.7 L15.1 8.2" fill="none" stroke="#2a3b5c" stroke-width="3" stroke-linecap="round" stroke-linejoin="round"/></svg>
<div class="t " style="left:1570.00px;top:1114.7px;font-size:21.5px;line-height:24px;color:#172b4d;-webkit-text-stroke:0.58px #172b4d;transform:scaleX(0.9259);">Dates</div>
<div class="t " style="left:1570.00px;top:1156.7px;font-size:21.5px;line-height:24px;color:#6b778c;-webkit-text-stroke:0.3px #6b778c;transform:scaleX(0.9253);">Created:</div>
<div class="t " style="left:1787.00px;top:1156.7px;font-size:21.5px;line-height:24px;color:#172b4d;-webkit-text-stroke:0.3px #172b4d;transform:scaleX(0.9700);">51 minutes ago</div>
<div class="t " style="left:1570.00px;top:1194.8px;font-size:21.5px;line-height:24px;color:#6b778c;-webkit-text-stroke:0.3px #6b778c;transform:scaleX(0.9627);">Updated:</div>
<div class="t " style="left:1787.00px;top:1194.8px;font-size:21.5px;line-height:24px;color:#172b4d;-webkit-text-stroke:0.3px #172b4d;transform:scaleX(0.9700);">50 minutes ago</div>
<div class="r" style="left:1539.5px;top:1272px;width:21px;height:21px;background:#ebecf0;border-radius:4px;"></div>
<svg class="s" style="left:1539.5px;top:1272px;" width="21" height="21" viewBox="0 0 21 21"><path d="M5.9 8.2 L10.5 12.7 L15.1 8.2" fill="none" stroke="#2a3b5c" stroke-width="3" stroke-linecap="round" stroke-linejoin="round"/></svg>
<div class="t " style="left:1569.50px;top:1272.3px;font-size:21.5px;line-height:24px;color:#172b4d;-webkit-text-stroke:0.58px #172b4d;transform:scaleX(0.9830);">Scheduled Meetings</div>
<svg class="s" style="left:1568px;top:1316px;" width="26" height="26" viewBox="0 0 26 26"><rect x="3" y="3" width="20" height="20" rx="3.2" fill="none" stroke="#172b4d" stroke-width="1.9"/>
<path d="M3 8.2 L23 8.2" stroke="#172b4d" stroke-width="1.6"/>
<circle cx="8.4" cy="13.4" r="1.2" fill="#172b4d"/><circle cx="12.4" cy="13.4" r="1.2" fill="#172b4d"/><circle cx="16.4" cy="13.4" r="1.2" fill="#172b4d"/>
<circle cx="8.4" cy="17.6" r="1.2" fill="#172b4d"/><circle cx="12.4" cy="17.6" r="1.2" fill="#172b4d"/></svg>
<div class="t " style="left:1603.00px;top:1318.5px;font-size:21.5px;line-height:24px;color:#172b4d;-webkit-text-stroke:0.3px #172b4d;transform:scaleX(0.9631);">No meetings have been scheduled yet.</div>
<div class="r" style="left:2078px;top:1305px;width:89px;height:48px;background:#2d64db;border-radius:5px;"></div>
<div class="t " style="left:2096.20px;top:1318.5px;font-size:21.5px;line-height:24px;color:#ffffff;font-weight:bold;transform:scaleX(0.9025);">Login</div>
<svg class="s" style="left:2188.5px;top:1324px;" width="16.6" height="12.4" viewBox="0 0 16.6 12.4"><path d="M3.50 3.50 L8.30 8.90 L13.10 3.50" fill="none" stroke="#172b4d" stroke-width="3" stroke-linecap="round" stroke-linejoin="round"/></svg>
<div class="r" style="left:560px;top:282px;width:262px;height:822px;background:#fff;border:1px solid #e3e5ea;border-radius:5px;box-shadow:0 5px 12px rgba(9,30,66,0.22),0 0 1px rgba(9,30,66,0.25)"></div>
<div class="r" style="left:562px;top:336px;width:262px;height:1px;background:#dcdfe4;"></div>
<div class="r" style="left:562px;top:391px;width:262px;height:1px;background:#dcdfe4;"></div>
<div class="r" style="left:562px;top:491px;width:262px;height:1px;background:#dcdfe4;"></div>
<div class="r" style="left:562px;top:681px;width:262px;height:1px;background:#dcdfe4;"></div>
<div class="r" style="left:562px;top:1051px;width:262px;height:1px;background:#dcdfe4;"></div>
<div class="t " style="left:576.90px;top:299.2px;font-size:21.5px;line-height:24px;color:#42526e;-webkit-text-stroke:0.3px #42526e;transform:scaleX(0.9500);">Log work</div>
<div class="t " style="left:576.90px;top:354.2px;font-size:21.5px;line-height:24px;color:#42526e;-webkit-text-stroke:0.3px #42526e;transform:scaleX(0.9500);">Archive</div>
<div class="t " style="left:576.90px;top:409.0px;font-size:21.5px;line-height:24px;color:#42526e;-webkit-text-stroke:0.3px #42526e;transform:scaleX(0.9500);">Attach files</div>
<div class="t " style="left:576.90px;top:454.0px;font-size:21.5px;line-height:24px;color:#42526e;-webkit-text-stroke:0.3px #42526e;transform:scaleX(0.9500);">Attach Screenshot</div>
<div class="t " style="left:576.90px;top:509.0px;font-size:21.5px;line-height:24px;color:#42526e;-webkit-text-stroke:0.3px #42526e;transform:scaleX(0.9500);">Add vote</div>
<div class="t " style="left:576.90px;top:554.0px;font-size:21.5px;line-height:24px;color:#42526e;-webkit-text-stroke:0.3px #42526e;transform:scaleX(0.9500);">Voters</div>
<div class="t " style="left:576.90px;top:599.0px;font-size:21.5px;line-height:24px;color:#42526e;-webkit-text-stroke:0.3px #42526e;transform:scaleX(0.9500);">Stop watching</div>
<div class="t " style="left:576.90px;top:644.0px;font-size:21.5px;line-height:24px;color:#42526e;-webkit-text-stroke:0.3px #42526e;transform:scaleX(0.9500);">Watchers</div>
<div class="t " style="left:576.90px;top:699.0px;font-size:21.5px;line-height:24px;color:#42526e;-webkit-text-stroke:0.3px #42526e;transform:scaleX(0.9500);">Create linked issue</div>
<div class="t " style="left:576.90px;top:744.0px;font-size:21.5px;line-height:24px;color:#42526e;-webkit-text-stroke:0.3px #42526e;transform:scaleX(0.9500);">Move</div>
<div class="t " style="left:576.90px;top:789.0px;font-size:21.5px;line-height:24px;color:#42526e;-webkit-text-stroke:0.3px #42526e;transform:scaleX(0.9500);">Link</div>
<div class="t " style="left:576.90px;top:834.0px;font-size:21.5px;line-height:24px;color:#42526e;-webkit-text-stroke:0.3px #42526e;transform:scaleX(0.9500);">Clone</div>
<div class="t " style="left:576.90px;top:879.0px;font-size:21.5px;line-height:24px;color:#42526e;-webkit-text-stroke:0.3px #42526e;transform:scaleX(0.9500);">Labels</div>
<div class="t " style="left:576.90px;top:924.0px;font-size:21.5px;line-height:24px;color:#42526e;-webkit-text-stroke:0.3px #42526e;transform:scaleX(0.9500);">Start Teams Conversation</div>
<div class="t " style="left:576.90px;top:969.0px;font-size:21.5px;line-height:24px;color:#42526e;-webkit-text-stroke:0.3px #42526e;transform:scaleX(0.9500);">Send email</div>
<div class="t " style="left:576.90px;top:1014.0px;font-size:21.5px;line-height:24px;color:#42526e;-webkit-text-stroke:0.3px #42526e;transform:scaleX(0.9500);">Schedule Meeting</div>
<div class="t " style="left:576.90px;top:1069.5px;font-size:21.5px;line-height:24px;color:#42526e;-webkit-text-stroke:0.3px #42526e;transform:scaleX(0.9500);">Delete</div>
<div class="r" style="left:558px;top:952px;width:252px;height:44px;border:6px solid #7abca3"></div>
</body></html>
